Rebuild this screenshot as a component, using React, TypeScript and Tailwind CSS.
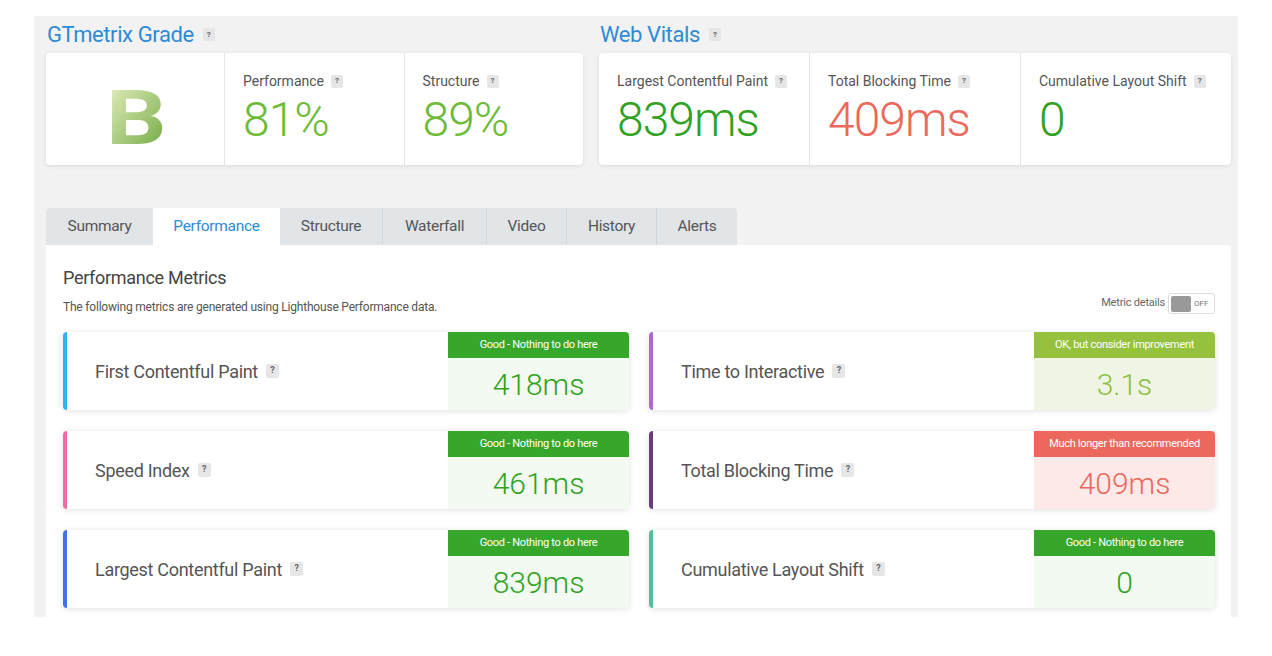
import { ReactNode } from 'react';

type Tone = 'good' | 'ok' | 'bad';

const tones: Record<Tone, { head: string; body: string; value: string; text: string }> = {
  good: { head: 'bg-[#36a72a]', body: 'bg-[#f3faf1]', value: 'text-[#2fa222]', text: 'Good - Nothing to do here' },
  ok: { head: 'bg-[#95c13f]', body: 'bg-[#eef5e4]', value: 'text-[#8cc043]', text: 'OK, but consider improvement' },
  bad: { head: 'bg-[#ed685c]', body: 'bg-[#fdeae8]', value: 'text-[#ec685c]', text: 'Much longer than recommended' },
};

const leftMetrics = [
  { label: 'First Contentful Paint', value: '418ms', tone: 'good' as Tone, bar: 'border-[#2fb4ef]' },
  { label: 'Speed Index', value: '461ms', tone: 'good' as Tone, bar: 'border-[#ef6aa7]' },
  { label: 'Largest Contentful Paint', value: '839ms', tone: 'good' as Tone, bar: 'border-[#3e74e6]' },
];

const rightMetrics = [
  { label: 'Time to Interactive', value: '3.1s', tone: 'ok' as Tone, bar: 'border-[#b067d6]' },
  { label: 'Total Blocking Time', value: '409ms', tone: 'bad' as Tone, bar: 'border-[#6a3d7c]' },
  { label: 'Cumulative Layout Shift', value: '0', tone: 'good' as Tone, bar: 'border-[#47c49c]' },
];

const tabs = ['Summary', 'Performance', 'Structure', 'Waterfall', 'Video', 'History', 'Alerts'];
const tabWidths = ['w-[107px]', 'w-[127px]', 'w-[102px]', 'w-[104px]', 'w-[80px]', 'w-[90px]', 'w-[81px]'];

function Help({ small }: { small?: boolean }) {
  return (
    <span
      className={`inline-flex items-center justify-center rounded-[2px] bg-[#e6e6e6] font-bold text-[#666] ${
        small ? 'w-[12px] h-[13px] text-[8px]' : 'w-[13px] h-[14px] text-[9px]'
      }`}
    >
      ?
    </span>
  );
}

function StatCell({ label, children, last }: { label: string; children: ReactNode; last?: boolean }) {
  return (
    <div className={`flex-1 pl-[18px] pt-[20px] ${last ? '' : 'border-r border-[#e4e4e4]'}`}>
      <div className="flex items-center gap-[7px] text-[14px] leading-[16px] text-[#555]">
        {label}
        <Help small />
      </div>
      <div className="mt-[6px] text-[48px] leading-[50px] font-light tracking-[-1px]">{children}</div>
    </div>
  );
}

function MetricCard({ label, value, tone, bar }: { label: string; value: string; tone: Tone; bar: string }) {
  const t = tones[tone];
  return (
    <div className={`flex h-[78px] rounded-[4px] border-l-4 ${bar} bg-white shadow-[0_1px_6px_rgba(0,0,0,0.12)] overflow-hidden`}>
      <div className="flex flex-1 items-center gap-[8px] pl-[28px] text-[18px] text-[#555] tracking-[-0.3px]">
        {label}
        <Help />
      </div>
      <div className={`flex w-[181px] flex-col ${t.body}`}>
        <div className={`h-[26px] ${t.head} flex items-center justify-center text-[11px] text-white tracking-[-0.3px]`}>
          {t.text}
        </div>
        <div className={`flex flex-1 items-center justify-center text-[30px] font-light ${t.value}`}>{value}</div>
      </div>
    </div>
  );
}

export default function App() {
  return (
    <div className="h-[656px] bg-white font-['Roboto',sans-serif]">
      <div className="ml-[34px] pt-[16px]">
        <div className="w-[1204px] h-[601px] bg-[#f2f2f2] pl-[12px] pr-[7px] pt-[6px] overflow-hidden">
          {/* Top cards */}
          <div className="flex gap-[16px]">
            <div className="w-[537px]">
              <div className="flex items-center gap-[9px] h-[25px] mb-[6px] pl-[1px]">
                <span className="text-[22px] text-[#2d8bd6] tracking-[-0.4px]">GTmetrix Grade</span>
                <Help small />
              </div>
              <div className="flex h-[112px] rounded-[4px] bg-white shadow-[0_1px_4px_rgba(0,0,0,0.1)]">
                <div className="w-[179px] flex items-center justify-center border-r border-[#e4e4e4] pt-[18px] pl-[2px]">
                  <span className="inline-block scale-x-[1.25] text-[76px] leading-none font-bold bg-linear-to-br from-[#eaf1c4] to-[#6aa533] bg-clip-text text-transparent">
                    B
                  </span>
                </div>
                <StatCell label="Performance">
                  <span className="text-[#6dbb37]">81%</span>
                </StatCell>
                <StatCell label="Structure" last>
                  <span className="text-[#6dbb37]">89%</span>
                </StatCell>
              </div>
            </div>
            <div className="w-[632px]">
              <div className="flex items-center gap-[9px] h-[25px] mb-[6px] pl-[1px]">
                <span className="text-[22px] text-[#2d8bd6] tracking-[-0.4px]">Web Vitals</span>
                <Help small />
              </div>
              <div className="flex h-[112px] rounded-[4px] bg-white shadow-[0_1px_4px_rgba(0,0,0,0.1)]">
                <StatCell label="Largest Contentful Paint">
                  <span className="text-[#2fa222]">839ms</span>
                </StatCell>
                <StatCell label="Total Blocking Time">
                  <span className="text-[#ec685c]">409ms</span>
                </StatCell>
                <StatCell label="Cumulative Layout Shift" last>
                  <span className="text-[#2fa222]">0</span>
                </StatCell>
              </div>
            </div>
          </div>

          {/* Tabs */}
          <div className="mt-[43px] flex h-[37px]">
            {tabs.map((tab, i) => (
              <div
                key={tab}
                className={`${tabWidths[i]} flex items-center justify-center pt-[1px] text-[15.5px] tracking-[-0.3px] ${
                  tab === 'Performance' ? 'bg-white text-[#2d8bd6]' : 'bg-[#e1e5e8] text-[#555]'
                } ${i > 0 && tab !== 'Performance' && tabs[i - 1] !== 'Performance' ? 'border-l border-[#d2d7db]' : ''} ${
                  i === 0 ? 'rounded-tl-[4px]' : ''
                } ${i === tabs.length - 1 ? 'rounded-tr-[4px]' : ''}`}
              >
                {tab}
              </div>
            ))}
          </div>

          {/* Panel */}
          <div className="bg-white rounded-tr-[4px] h-[400px] px-[17px] pr-[16px] pt-[21px]">
            <div className="flex items-end justify-between">
              <div>
                <h2 className="text-[18px] leading-[24px] text-[#444] tracking-[-0.3px]">Performance Metrics</h2>
                <p className="mt-[10px] text-[12px] leading-[15px] text-[#555] tracking-[-0.2px]">
                  The following metrics are generated using Lighthouse Performance data.
                </p>
              </div>
              <div className="flex items-center gap-[3px] mb-[1px]">
                <span className="text-[11px] text-[#666] tracking-[-0.2px]">Metric details</span>
                <div className="flex items-center w-[47px] h-[21px] rounded-[3px] border border-[#dcdcdc] pl-[2px] gap-[3px]">
                  <div className="w-[20px] h-[16px] rounded-[2px] bg-[#999]" />
                  <span className="text-[8px] text-[#777]">OFF</span>
                </div>
              </div>
            </div>

            <div className="mt-[17px] grid grid-cols-2 gap-x-[20px] gap-y-[21px]">
              {[0, 1, 2].map((r) => [
                <MetricCard key={`l${r}`} {...leftMetrics[r]} />,
                <MetricCard key={`r${r}`} {...rightMetrics[r]} />,
              ])}
            </div>
          </div>
        </div>
      </div>
    </div>
  );
}
